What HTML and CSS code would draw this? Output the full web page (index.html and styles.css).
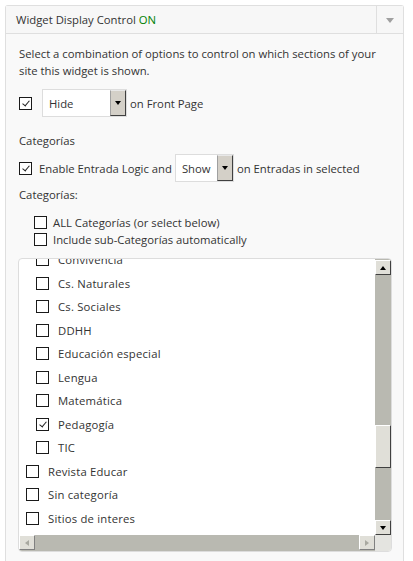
FILE: index.html
```html
<!DOCTYPE html>
<html lang="es">
<head>
<meta charset="UTF-8" />
<title>Widget Display Control</title>
<link rel="stylesheet" href="styles.css">
</head>
<body>

<div class="widget">
  <div class="widget-top">
    <div class="widget-title">Widget Display Control <span class="on">ON</span></div>
    <div class="widget-toggle"><span class="toggle-arrow"></span></div>
  </div>

  <div class="widget-inside">
    <p class="intro">Select a combination of options to control on which sections of your site this widget is shown.</p>

    <div class="row row-front">
      <span class="check checked"></span>
      <span class="select select-hide">Hide<span class="select-btn"><span class="arrow-down"></span></span></span>
      <span>on Front Page</span>
    </div>

    <p class="heading">Categorías</p>

    <div class="row row-cat">
      <span class="check checked"></span>
      <span>Enable Entrada Logic and</span>
      <span class="select select-show">Show<span class="select-btn"><span class="arrow-down"></span></span></span>
      <span>on Entradas in selected</span>
    </div>

    <p class="heading sub">Categorías:</p>

    <div class="opts">
      <div class="opt"><span class="check"></span>ALL Categorías (or select below)</div>
      <div class="opt"><span class="check"></span>Include sub-Categorías automatically</div>
    </div>

    <div class="listbox">
      <div class="list-view">
        <ul class="list">
          <li class="child"><span class="check"></span>Convivencia</li>
          <li class="child"><span class="check"></span>Cs. Naturales</li>
          <li class="child"><span class="check"></span>Cs. Sociales</li>
          <li class="child"><span class="check"></span>DDHH</li>
          <li class="child"><span class="check"></span>Educación especial</li>
          <li class="child"><span class="check"></span>Lengua</li>
          <li class="child"><span class="check"></span>Matemática</li>
          <li class="child"><span class="check checked"></span>Pedagogía</li>
          <li class="child"><span class="check"></span>TIC</li>
          <li><span class="check"></span>Revista Educar</li>
          <li><span class="check"></span>Sin categoría</li>
          <li><span class="check"></span>Sitios de interes</li>
          <li><span class="check"></span></li>
        </ul>
      </div>
      <div class="vscroll">
        <span class="sb-btn"><span class="arrow-up"></span></span>
        <span class="sb-track">
          <span class="sb-thumb"></span>
        </span>
        <span class="sb-btn"><span class="arrow-down"></span></span>
      </div>
      <div class="hscroll">
        <span class="sb-btn"><span class="arrow-left"></span></span>
        <span class="sb-track"></span>
        <span class="sb-btn"><span class="arrow-right"></span></span>
      </div>
      <div class="corner"></div>
    </div>
  </div>
</div>

</body>
</html>
```

FILE: styles.css
```css
body {
  margin: 0;
  background: #ffffff;
  font-family: 'Open Sans', 'DejaVu Sans', sans-serif;
  font-size: 11.3px;
  color: #333333;
}
.widget {
  margin: 5px 0 0 5px;
  width: 397px;
  border: 1px solid #dfdfdf;
  border-bottom: none;
  border-radius: 3px 3px 0 0;
  background: #f9f9f9;
  height: 600px;
}
.widget-top {
  display: flex;
  height: 27px;
  border-bottom: 1px solid #dfdfdf;
  background: #f7f7f7;
}
.widget-title {
  flex: 1;
  padding: 6px 0 0 10px;
  line-height: 15px;
}
.widget-title .on {
  color: #008000;
}
.widget-toggle {
  width: 26px;
  border-left: 1px solid #dfdfdf;
  display: flex;
  justify-content: center;
  align-items: center;
}
.toggle-arrow {
  width: 0;
  height: 0;
  border-left: 4px solid transparent;
  border-right: 4px solid transparent;
  border-top: 5px solid #a0a0a0;
  margin-top: 2px;
}
.widget-inside {
  padding: 11px 11px 0 12px;
}
p {
  margin: 0;
}
.intro {
  line-height: 17px;
  padding-left: 1px;
}
.row {
  display: flex;
  align-items: center;
  gap: 3px;
  padding-left: 1px;
}
.row-front {
  margin-top: 10px;
}
.row-front .select {
  margin-left: 7px;
}
.row-cat {
  margin-top: 4px;
}
.row-cat .check {
  margin-right: 4px;
}
.heading {
  margin-top: 15px;
  padding-left: 1px;
  line-height: 18px;
}
.heading.sub {
  margin-top: 4px;
}
.check {
  display: inline-block;
  box-sizing: border-box;
  width: 13px;
  height: 13px;
  border: 1px solid #1a1a1a;
  background: #ffffff;
  position: relative;
  flex: none;
}
.check.checked::after {
  content: "";
  position: absolute;
  left: 4px;
  top: 1px;
  width: 3px;
  height: 6px;
  border-right: 1px solid #222222;
  border-bottom: 1px solid #222222;
  transform: rotate(40deg);
}
.select {
  display: flex;
  align-items: center;
  box-sizing: border-box;
  height: 28px;
  border: 1px solid #dddddd;
  background: #ffffff;
  padding-left: 6px;
  justify-content: space-between;
}
.select-hide {
  width: 85px;
}
.select-show {
  width: 59px;
}
.select-btn {
  box-sizing: border-box;
  width: 16px;
  height: 26px;
  background: #d4d0c8;
  border-left: 1px solid #a0a0a0;
  border-top: 1px solid #e8e8e8;
  border-right: 1px solid #404040;
  border-bottom: 1px solid #404040;
  display: flex;
  justify-content: center;
  align-items: center;
}
.arrow-down {
  width: 0;
  height: 0;
  border-left: 3px solid transparent;
  border-right: 3px solid transparent;
  border-top: 4px solid #000000;
}
.arrow-up {
  width: 0;
  height: 0;
  border-left: 3px solid transparent;
  border-right: 3px solid transparent;
  border-bottom: 4px solid #000000;
}
.arrow-left {
  width: 0;
  height: 0;
  border-top: 3px solid transparent;
  border-bottom: 3px solid transparent;
  border-right: 4px solid #a8a8a0;
}
.arrow-right {
  width: 0;
  height: 0;
  border-top: 3px solid transparent;
  border-bottom: 3px solid transparent;
  border-left: 4px solid #a8a8a0;
}
.opts {
  margin-top: 10px;
  padding-left: 16px;
}
.opt {
  display: flex;
  align-items: center;
  gap: 6px;
  height: 17px;
  line-height: 17px;
}
.listbox {
  margin-top: 10px;
  box-sizing: border-box;
  width: 374px;
  height: 294px;
  border: 1px solid #dddddd;
  border-radius: 4px;
  background: #ffffff;
  display: grid;
  grid-template-columns: 1fr 16px;
  grid-template-rows: 1fr 16px;
  overflow: hidden;
}
.list-view {
  overflow: hidden;
}
.list {
  list-style: none;
  margin: -11px 0 0 0;
  padding: 0;
}
.list li {
  display: flex;
  align-items: center;
  gap: 9px;
  height: 23.5px;
  padding-left: 7px;
  letter-spacing: 0.2px;
}
.list li.child {
  padding-left: 17px;
}
.vscroll {
  display: flex;
  flex-direction: column;
  background: #b9b9b1;
  padding-top: 1px;
}
.hscroll {
  display: flex;
  background: #b9b9b1;
}
.corner {
  background: #e4e4e0;
}
.sb-btn {
  box-sizing: border-box;
  width: 16px;
  height: 15px;
  flex: none;
  background: #e0dfd8;
  border-left: 1px solid #ffffff;
  border-top: 1px solid #ffffff;
  border-right: 1px solid #404040;
  border-bottom: 1px solid #404040;
  display: flex;
  justify-content: center;
  align-items: center;
}
.hscroll .sb-btn {
  border-color: #ffffff #808080 #808080 #ffffff;
}
.sb-track {
  flex: 1;
  display: flex;
  flex-direction: column;
}
.sb-thumb {
  box-sizing: border-box;
  margin-top: 150px;
  height: 43px;
  background: #e0dfd8;
  border-left: 1px solid #ffffff;
  border-top: 1px solid #ffffff;
  border-right: 1px solid #404040;
  border-bottom: 1px solid #404040;
}
```
